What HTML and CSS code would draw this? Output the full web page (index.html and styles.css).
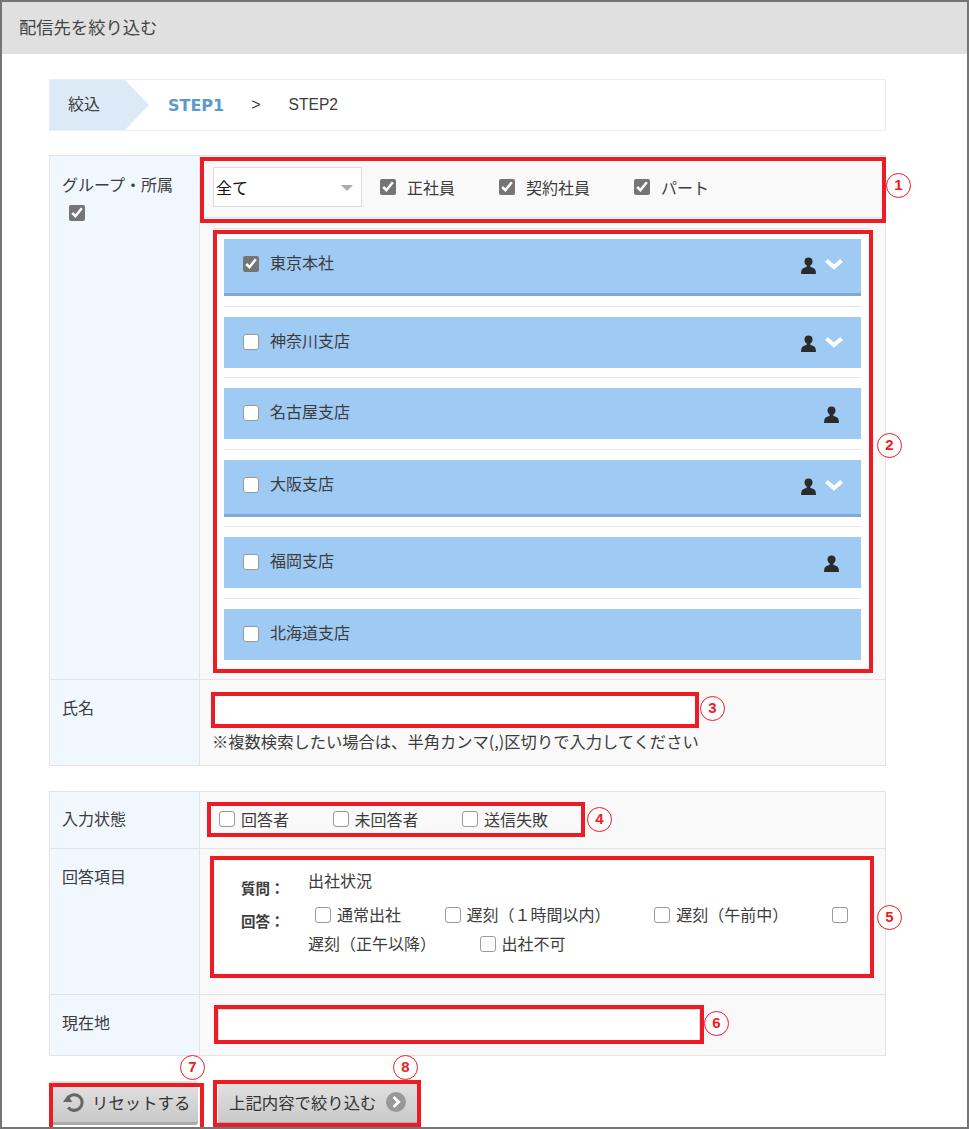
FILE: index.html
```html
<!DOCTYPE html>
<html lang="ja">
<head>
    <meta charset="UTF-8">
    <title>配信先を絞り込む</title>
    <link rel="stylesheet" href="styles.css">
</head>
<body>
    <svg class="icon-defs" width="0" height="0">
        <symbol id="person" viewBox="0 0 15 17">
            <circle cx="7.5" cy="4.6" r="4" />
            <path d="M5.6 7.5 L5.6 10 C3 10.8 .8 11.6 .4 13.4 L0 17 L15 17 L14.6 13.4 C14.2 11.6 12 10.8 9.4 10 L9.4 7.5 Z" />
        </symbol>
        <symbol id="chevron" viewBox="0 0 18 12">
            <path d="M1.4 2.4 L9 9 L16.6 2.4" fill="none" stroke="#fff" stroke-width="4" />
        </symbol>
    </svg>

    <div class="frame">
        <div class="frame-title">配信先を絞り込む</div>

        <div class="content">
            <div class="steps">
                <div class="steps-label">絞込</div>
                <span class="step-current">STEP1</span>
                <span class="step-sep">&gt;</span>
                <span class="step-next">STEP2</span>
            </div>

            <!-- Group + name -->
            <div class="form-table">
                <div class="form-row group-row">
                    <div class="form-label">
                        <div>グループ・所属</div>
                        <input type="checkbox" class="check label-check" checked>
                    </div>
                    <div class="form-value group-value">
                        <div class="group-filter">
                            <div class="select-wrap">
                                <select class="select">
                                    <option>全て</option>
                                </select>
                            </div>
                            <label class="filter-item"><input type="checkbox" class="check" checked>正社員</label>
                            <label class="filter-item"><input type="checkbox" class="check" checked>契約社員</label>
                            <label class="filter-item"><input type="checkbox" class="check" checked>パート</label>
                        </div>

                        <div class="branch-list">
                            <div class="branch">
                                <div class="branch-bar is-open">
                                    <input type="checkbox" class="check" checked>
                                    <span class="branch-name">東京本社</span>
                                    <svg class="person"><use href="#person" /></svg>
                                    <svg class="chevron"><use href="#chevron" /></svg>
                                </div>
                            </div>
                            <div class="branch branch-tight">
                                <div class="branch-bar">
                                    <input type="checkbox" class="check">
                                    <span class="branch-name">神奈川支店</span>
                                    <svg class="person"><use href="#person" /></svg>
                                    <svg class="chevron"><use href="#chevron" /></svg>
                                </div>
                            </div>
                            <div class="branch">
                                <div class="branch-bar">
                                    <input type="checkbox" class="check">
                                    <span class="branch-name">名古屋支店</span>
                                    <svg class="person person-only"><use href="#person" /></svg>
                                </div>
                            </div>
                            <div class="branch branch-tight">
                                <div class="branch-bar is-open">
                                    <input type="checkbox" class="check">
                                    <span class="branch-name">大阪支店</span>
                                    <svg class="person"><use href="#person" /></svg>
                                    <svg class="chevron"><use href="#chevron" /></svg>
                                </div>
                            </div>
                            <div class="branch">
                                <div class="branch-bar">
                                    <input type="checkbox" class="check">
                                    <span class="branch-name">福岡支店</span>
                                    <svg class="person person-only"><use href="#person" /></svg>
                                </div>
                            </div>
                            <div class="branch">
                                <div class="branch-bar">
                                    <input type="checkbox" class="check">
                                    <span class="branch-name">北海道支店</span>
                                </div>
                            </div>
                        </div>
                    </div>
                </div>

                <div class="form-row name-row">
                    <div class="form-label">氏名</div>
                    <div class="form-value name-value">
                        <input type="text" class="text-input name-input">
                        <p class="note">※複数検索したい場合は、半角カンマ(,)区切りで入力してください</p>
                    </div>
                </div>
            </div>

            <!-- Answer state -->
            <div class="form-table second-table">
                <div class="form-row state-row">
                    <div class="form-label">入力状態</div>
                    <div class="form-value state-value">
                        <label class="state-item"><input type="checkbox" class="check">回答者</label>
                        <label class="state-item"><input type="checkbox" class="check">未回答者</label>
                        <label class="state-item"><input type="checkbox" class="check">送信失敗</label>
                    </div>
                </div>

                <div class="form-row answer-row">
                    <div class="form-label">回答項目</div>
                    <div class="form-value answer-value">
                        <div class="answer-box">
                            <div class="answer-heads">
                                <div>質問：</div>
                                <div>回答：</div>
                            </div>
                            <div class="answer-body">
                                <div class="question">出社状況</div>
                                <div class="answers">
                                    <input type="checkbox" class="check"><wbr><span class="answer">通常出社</span>
                                    <input type="checkbox" class="check"><wbr><span class="answer">遅刻（１時間以内）</span>
                                    <input type="checkbox" class="check"><wbr><span class="answer">遅刻（午前中）</span>
                                    <input type="checkbox" class="check"><wbr><span class="answer">遅刻（正午以降）</span>
                                    <input type="checkbox" class="check"><wbr><span class="answer">出社不可</span>
                                </div>
                            </div>
                        </div>
                    </div>
                </div>

                <div class="form-row place-row">
                    <div class="form-label">現在地</div>
                    <div class="form-value place-value">
                        <input type="text" class="text-input place-input">
                    </div>
                </div>
            </div>

            <!-- Buttons -->
            <div class="buttons">
                <button class="btn btn-reset">
                    <svg class="undo" viewBox="0 0 24 24">
                        <path d="M6.2 8.2 A8.2 8.2 0 1 1 6.4 18.2" fill="none" stroke="#666" stroke-width="3.2" />
                        <path d="M1 12.6 L10.8 12.6 L6 5.4 Z" fill="#666" />
                    </svg>
                    リセットする
                </button>
                <button class="btn btn-submit">
                    上記内容で絞り込む
                    <svg class="go" viewBox="0 0 20 20">
                        <circle cx="10" cy="10" r="10" fill="#989898" />
                        <path d="M7.6 5 L12.6 10 L7.6 15" fill="none" stroke="#fff" stroke-width="2.8" />
                    </svg>
                </button>
            </div>
        </div>

        <!-- Red annotations over the screenshot -->
        <div class="mark mark-1"></div>
        <div class="mark mark-2"></div>
        <div class="mark mark-3"></div>
        <div class="mark mark-4"></div>
        <div class="mark mark-5"></div>
        <div class="mark mark-6"></div>
        <div class="mark mark-7"></div>
        <div class="mark mark-8"></div>
        <span class="num num-1">1</span>
        <span class="num num-2">2</span>
        <span class="num num-3">3</span>
        <span class="num num-4">4</span>
        <span class="num num-5">5</span>
        <span class="num num-6">6</span>
        <span class="num num-7">7</span>
        <span class="num num-8">8</span>
    </div>
</body>
</html>
```

FILE: styles.css
```css
/* Basic Reset */
* {
    margin: 0;
    padding: 0;
    box-sizing: border-box;
}

body {
    font-family: "Noto Sans CJK JP", "Noto Sans", sans-serif;
    font-size: 16px;
    color: #3c3c3c;
    background-color: #fff;
}

.icon-defs {
    position: absolute;
}

.frame {
    position: relative;
    width: 969px;
    height: 1129px;
    border: 2px solid #757575;
    overflow: hidden;
}

.frame-title {
    height: 52px;
    padding-left: 17px;
    line-height: 50px;
    font-size: 17.3px;
    color: #444;
    background-color: #e0e0e0;
}

.content {
    padding: 25px 0 0 47px;
}

/* Steps */
.steps {
    display: flex;
    align-items: center;
    width: 837px;
    height: 52px;
    border: 1px solid #eee;
}

.steps-label {
    width: 99px;
    height: 50px;
    margin-right: 19px;
    padding-left: 18px;
    line-height: 47px;
    background-color: #dceaf8;
    clip-path: polygon(0 0, 75px 0, 100% 50%, 75px 100%, 0 100%);
}

.step-current {
    font-family: "DejaVu Sans", sans-serif;
    font-size: 16px;
    font-weight: bold;
    color: #5a9bc9;
}

.step-sep {
    margin: 0 28px 0 27px;
    font-family: "Liberation Sans", sans-serif;
}

.step-next {
    font-family: "Liberation Sans", sans-serif;
    font-size: 15.6px;
}

/* Form tables */
.form-table {
    width: 837px;
    margin-top: 24px;
    border: 1px solid #e3e3e3;
}

.second-table {
    margin-top: 25px;
}

.form-row {
    display: flex;
    border-bottom: 1px solid #e3e3e3;
}

.form-row:last-child {
    border-bottom: none;
}

.form-label {
    flex: 0 0 150px;
    padding: 14px 0 0 12px;
    background-color: #f0f7ff;
    border-right: 1px solid #e3e3e3;
    line-height: 24px;
}

.form-value {
    flex: 1;
    background-color: #f9f9f9;
}

.group-row .form-label {
    padding-top: 16px;
}

.label-check {
    display: block;
    margin: 9px 0 0 7px;
}

/* Checkboxes */
.check {
    width: 16px;
    height: 16px;
    flex: none;
    accent-color: #757575;
    vertical-align: -2px;
}

.check:not(:checked) {
    appearance: none;
    background-color: #fff;
    border: 1px solid #9a9a9a;
    border-radius: 3px;
}

/* Group row */
.group-filter {
    display: flex;
    align-items: center;
    height: 62px;
    padding-left: 13px;
    border-bottom: 1px solid #e3e3e3;
}

.select-wrap {
    position: relative;
    margin-right: 18px;
}

.select-wrap::after {
    content: "";
    position: absolute;
    right: 9px;
    top: 18px;
    border-top: 6px solid #aaa;
    border-left: 6px solid transparent;
    border-right: 6px solid transparent;
}

.select {
    display: block;
    width: 149px;
    height: 40px;
    padding-left: 2px;
    font-family: inherit;
    font-size: 16px;
    color: #111;
    background-color: #fff;
    border: 1px solid #ddd;
    appearance: none;
}

.filter-item {
    display: flex;
    align-items: center;
    gap: 11px;
    margin-right: 44px;
}

.branch-list {
    width: 657px;
    margin: 10px 0 9px 13px;
    padding: 0 9px 0 11px;
    background-color: #fff;
    border-top: 1px solid #e3e3e3;
}

.branch {
    padding: 10px 0;
    border-bottom: 1px solid #e3e3e3;
}

.branch-tight {
    padding-bottom: 9px;
}

.branch:last-child {
    border-bottom: none;
}

.branch-bar {
    display: flex;
    align-items: center;
    height: 51px;
    padding: 0 18px 5px 19px;
    background-color: #9fcaf4;
}

.branch-bar.is-open {
    height: 57px;
    padding-bottom: 8px;
    border-bottom: 3px solid #7ea8d8;
}

.branch-bar .check {
    margin-top: 4px;
}

.branch-name {
    flex: 1;
    margin-left: 11px;
}

.person {
    width: 15px;
    height: 17px;
    margin-top: 7px;
    fill: #2b2b2b;
}

.person-only {
    margin-right: 4px;
}

.chevron {
    width: 18px;
    height: 12px;
    margin: 4px 0 0 9px;
}

/* Name row */
.name-row .form-label {
    padding-top: 15px;
}

.name-value {
    height: 85px;
    padding: 14px 0 0 12px;
}

.text-input {
    display: block;
    height: 32px;
    background-color: #fff;
    border: 1px solid #ddd;
}

.name-input {
    width: 484px;
}

.note {
    margin-top: 4px;
    font-size: 16.3px;
    line-height: 22px;
}

/* Answer state row */
.state-row {
    height: 57px;
}

.state-value {
    display: flex;
    align-items: center;
    padding: 0 0 3px 19px;
}

.state-item {
    display: flex;
    align-items: center;
    gap: 6px;
    margin-right: 43.5px;
}

/* Answer row */
.answer-row {
    height: 146px;
}

.answer-row .form-label {
    padding-top: 15px;
}

.answer-value {
    padding: 12px 17px 0 15px;
}

.answer-box {
    display: flex;
    height: 112px;
    padding: 7px 0 0 26px;
    background-color: #fff;
}

.answer-heads {
    width: 67px;
    padding-top: 3px;
    font-weight: bold;
    font-size: 14.5px;
    line-height: 33px;
}

.question {
    line-height: 24px;
}

.answers {
    width: 550px;
    margin-top: 8px;
    line-height: 29px;
}

.answers .check {
    margin: 0 6px 0 7px;
}

.answer {
    margin-right: 33px;
    white-space: nowrap;
}

/* Place row */
.place-row {
    height: 60px;
}

.place-row .form-label {
    padding-top: 15px;
}

.place-value {
    padding: 14px 0 0 18px;
}

.place-input {
    width: 482px;
}

/* Buttons */
.buttons {
    display: flex;
    gap: 20px;
    margin-top: 25px;
}

.btn {
    display: flex;
    align-items: center;
    height: 44px;
    font-family: inherit;
    font-size: 16.4px;
    color: #333;
    background: linear-gradient(#e2e2e2, #c9c9c9);
    border: none;
    border-bottom: 3px solid #aaa;
    border-radius: 3px;
}

.btn-reset {
    width: 149px;
    padding-left: 13px;
    gap: 7px;
}

.btn-submit {
    width: 199px;
    padding-left: 11px;
    gap: 9px;
}

.undo {
    width: 23px;
    height: 23px;
}

.go {
    width: 20px;
    height: 20px;
}

/* Red annotations */
.mark {
    position: absolute;
    border: 4px solid #ed1c24;
}

.mark-1 { left: 198px; top: 155px; width: 686px; height: 66px; }
.mark-2 { left: 211px; top: 228px; width: 660px; height: 443px; }
.mark-3 { left: 209px; top: 690px; width: 488px; height: 36px; }
.mark-4 { left: 205px; top: 800px; width: 378px; height: 35px; }
.mark-5 { left: 208px; top: 854px; width: 664px; height: 122px; }
.mark-6 { left: 212px; top: 1003px; width: 490px; height: 39px; }
.mark-7 { left: 47px; top: 1081px; width: 155px; height: 48px; }
.mark-8 { left: 211px; top: 1078px; width: 208px; height: 47px; }

.num {
    position: absolute;
    width: 25px;
    height: 25px;
    font-family: "Liberation Sans", sans-serif;
    font-size: 15px;
    font-weight: bold;
    line-height: 22px;
    text-align: center;
    color: #ed1c24;
    background-color: #fff;
    border: 1.5px solid #ed1c24;
    border-radius: 50%;
}

.num-1 { left: 884px; top: 171px; }
.num-2 { left: 875px; top: 431px; }
.num-3 { left: 698px; top: 694px; }
.num-4 { left: 585px; top: 805px; }
.num-5 { left: 875px; top: 903px; }
.num-6 { left: 702px; top: 1009px; }
.num-7 { left: 178px; top: 1053px; }
.num-8 { left: 391px; top: 1053px; }
```
